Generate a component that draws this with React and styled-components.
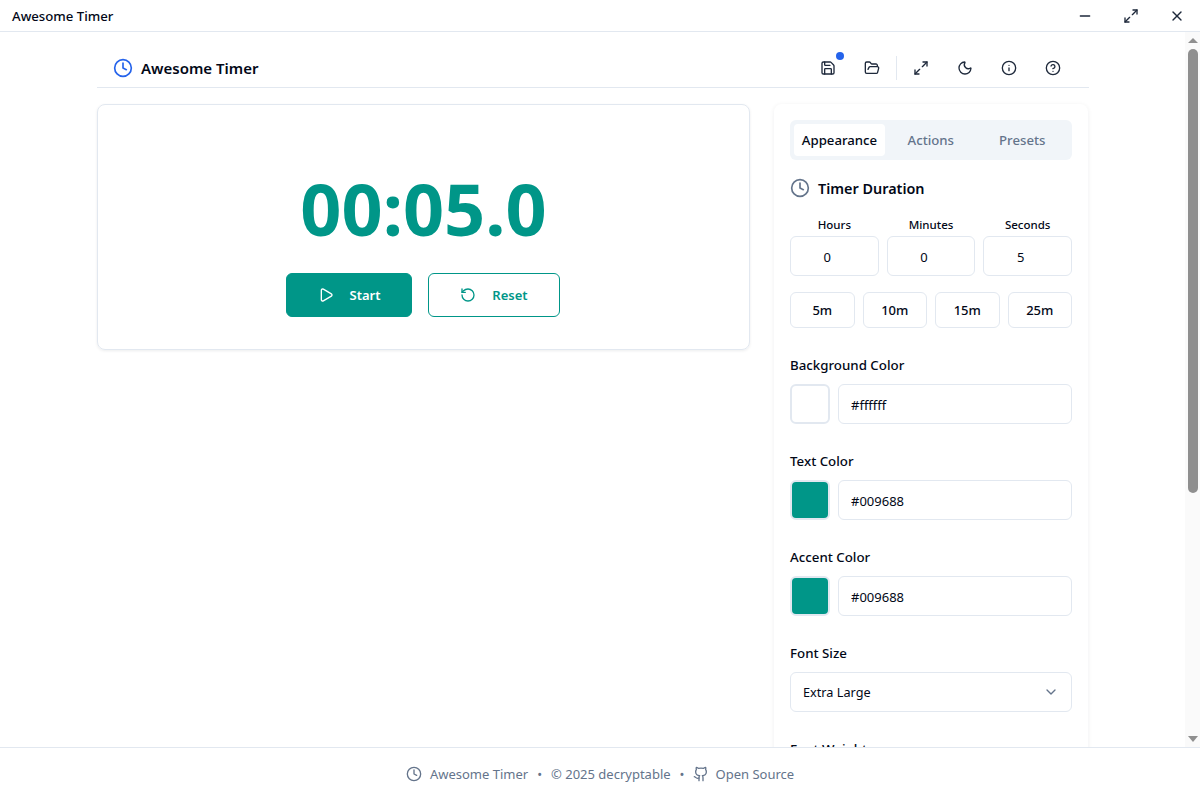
import React from 'react';
import styled, { createGlobalStyle } from 'styled-components';
import {
  ChevronDown,
  CircleHelp,
  Clock,
  FolderOpen,
  Github,
  Info,
  Maximize2,
  Minus,
  Moon,
  Play,
  RotateCcw,
  Save,
  X,
} from 'lucide-react';

const GlobalStyle = createGlobalStyle`
  html, body {
    margin: 0;
    height: 100%;
    overflow: hidden;
    background: #ffffff;
    font-family: 'Noto Sans', 'Open Sans', sans-serif;
    color: #020817;
  }
  * { box-sizing: border-box; }
`;

const Window = styled.div`
  display: flex;
  flex-direction: column;
  height: 100vh;
`;

const TitleBar = styled.div`
  display: flex;
  align-items: center;
  justify-content: space-between;
  flex: none;
  height: 32px;
  padding-left: 12px;
  border-bottom: 1px solid #e2e8f0;
`;

const WindowTitle = styled.span`
  font-size: 13.2px;
  font-weight: 500;
  color: #020817;
`;

const WindowControls = styled.div`
  display: flex;
`;

const WindowButton = styled.div`
  display: flex;
  align-items: center;
  justify-content: center;
  width: 46px;
  height: 31px;
  color: #1e293b;
`;

const Body = styled.div`
  display: flex;
  flex: 1;
  min-height: 0;
`;

const Scroller = styled.div`
  flex: 1;
  min-width: 0;
  overflow: hidden;
`;

// the window's own scrollbar, headless browsers don't paint one
const ScrollRail = styled.div`
  display: flex;
  flex-direction: column;
  align-items: center;
  flex: none;
  width: 15px;
  background: #fafafa;
`;

const ScrollArrow = styled.div`
  display: flex;
  align-items: center;
  justify-content: center;
  flex: none;
  height: 17px;
  margin-top: ${(p) => (p.$down ? 'auto' : '0')};

  &::before {
    content: '';
    border-left: 5px solid transparent;
    border-right: 5px solid transparent;
    border-bottom: ${(p) => (p.$down ? '0' : '5px solid #8f8f8f')};
    border-top: ${(p) => (p.$down ? '6px solid #8f8f8f' : '0')};
  }
`;

const ScrollThumb = styled.div`
  flex: none;
  width: 10px;
  height: 444px;
  border-radius: 5px;
  background: #8f8f8f;
`;

const Page = styled.div`
  width: 992px;
  margin-left: 97px;
  padding-bottom: 16px;
`;

const Header = styled.header`
  display: flex;
  align-items: center;
  justify-content: space-between;
  height: 56px;
  padding: 16px 18px 0 16px;
  border-bottom: 1px solid #e2e8f0;
`;

const Brand = styled.div`
  display: flex;
  align-items: center;
  gap: 8px;
  color: #2563eb;
`;

const BrandName = styled.h1`
  margin: 0;
  font-size: 15px;
  font-weight: 600;
  color: #020817;
`;

const Toolbar = styled.div`
  display: flex;
  align-items: center;
  gap: 8px;
`;

const ToolButton = styled.div`
  position: relative;
  display: flex;
  align-items: center;
  justify-content: center;
  width: 36px;
  height: 36px;
  color: #1e293b;
`;

const Dot = styled.span`
  position: absolute;
  top: 2px;
  right: 2px;
  width: 8px;
  height: 8px;
  border-radius: 50%;
  background: #2563eb;
`;

const Divider = styled.span`
  width: 1px;
  height: 24px;
  margin: 0 -2px;
  background: #e2e8f0;
`;

const Columns = styled.main`
  display: grid;
  grid-template-columns: 653px 314px;
  gap: 24px;
  align-items: start;
  padding-top: 16px;
`;

const TimerCard = styled.section`
  display: flex;
  flex-direction: column;
  align-items: center;
  height: 246px;
  padding-top: 62px;
  border: 1px solid #e2e8f0;
  border-radius: 8px;
  box-shadow: 0 1px 3px rgba(15, 23, 42, 0.08);
`;

const TimerValue = styled.div`
  font-size: 72px;
  line-height: 82px;
  font-weight: 700;
  color: #009688;
`;

const TimerActions = styled.div`
  display: flex;
  gap: 16px;
  margin: 24px 1px 0 0;
`;

const ActionButton = styled.div`
  display: flex;
  align-items: center;
  justify-content: center;
  gap: 16px;
  width: ${(p) => (p.$filled ? '126px' : '132px')};
  height: 44px;
  border: 1px solid #009688;
  border-radius: 6px;
  font-size: 13px;
  font-weight: 600;
  background: ${(p) => (p.$filled ? '#009688' : '#ffffff')};
  color: ${(p) => (p.$filled ? '#ffffff' : '#009688')};
`;

const SidePanel = styled.aside`
  min-height: 1013px;
  padding: 16px;
  border-radius: 8px;
  box-shadow: 0 1px 5px rgba(15, 23, 42, 0.07);
`;

const Tabs = styled.div`
  display: grid;
  grid-template-columns: 91px 1fr 1fr;
  align-items: center;
  height: 40px;
  padding: 4px;
  border-radius: 6px;
  background: #f1f5f9;
`;

const Tab = styled.div`
  display: flex;
  align-items: center;
  justify-content: center;
  height: 32px;
  border-radius: 4px;
  font-size: 13.2px;
  font-weight: 500;
  background: ${(p) => (p.$active ? '#ffffff' : 'transparent')};
  color: ${(p) => (p.$active ? '#020817' : '#64748b')};
`;

const SectionTitle = styled.h2`
  display: flex;
  align-items: center;
  gap: 8px;
  margin: 16px 0 0;
  height: 24px;
  font-size: 14.4px;
  font-weight: 600;
  color: #020817;

  svg {
    color: #64748b;
  }
`;

const TimeGrid = styled.div`
  display: grid;
  grid-template-columns: repeat(3, 1fr);
  gap: 8px;
  margin-top: 16px;
`;

const TimeField = styled.div`
  display: flex;
  flex-direction: column;
`;

const TimeLabel = styled.label`
  height: 20px;
  font-size: 11.5px;
  line-height: 18px;
  font-weight: 500;
  text-align: center;
`;

const Input = styled.input`
  display: block;
  width: 100%;
  min-width: 0;
  height: 40px;
  padding: 1px 12px 0;
  border: 1px solid #e2e8f0;
  border-radius: 6px;
  outline: none;
  font: inherit;
  font-size: 13px;
  color: #020817;
  background: #ffffff;
`;

const TimeInput = styled(Input)`
  padding: 1px 26px 0 12px;
  text-align: center;
`;

const Presets = styled.div`
  display: grid;
  grid-template-columns: repeat(4, 1fr);
  gap: 8px;
  margin-top: 16px;
`;

const PresetButton = styled.div`
  display: flex;
  align-items: center;
  justify-content: center;
  height: 36px;
  border: 1px solid #e2e8f0;
  border-radius: 6px;
  font-size: 13px;
  font-weight: 500;
`;

const Field = styled.div`
  margin-top: 28px;
`;

const FieldLabel = styled.label`
  display: block;
  height: 20px;
  margin-bottom: 8px;
  font-size: 13.3px;
  line-height: 18px;
  font-weight: 500;
`;

const ColorRow = styled.div`
  display: flex;
  gap: 8px;
`;

const Swatch = styled.div`
  flex: none;
  width: 40px;
  height: 40px;
  border: 2px solid #e2e8f0;
  border-radius: 6px;
  background: ${(p) => p.$color};
`;

const Select = styled.div`
  display: flex;
  align-items: center;
  justify-content: space-between;
  height: 40px;
  padding: 0 12px;
  border: 1px solid #e2e8f0;
  border-radius: 6px;
  font-size: 12.7px;

  svg {
    color: #64748b;
  }
`;

const Footer = styled.footer`
  display: flex;
  align-items: center;
  justify-content: center;
  flex: none;
  height: 53px;
  gap: 8px;
  border-top: 1px solid #e2e8f0;
  font-size: 13px;
  color: #64748b;
`;

const FooterDot = styled.span`
  margin: 0 1px;
`;

const FooterLink = styled.span`
  display: flex;
  align-items: center;
  gap: 6px;
`;

const colorFields = [
  { label: 'Background Color', value: '#ffffff' },
  { label: 'Text Color', value: '#009688' },
  { label: 'Accent Color', value: '#009688' },
];

const timeFields = [
  { label: 'Hours', value: '0' },
  { label: 'Minutes', value: '0' },
  { label: 'Seconds', value: '5' },
];

const App = () => {
  return (
    <Window>
      <GlobalStyle />
      <TitleBar>
        <WindowTitle>Awesome Timer</WindowTitle>
        <WindowControls>
          <WindowButton><Minus size={16} /></WindowButton>
          <WindowButton><Maximize2 size={16} /></WindowButton>
          <WindowButton><X size={16} /></WindowButton>
        </WindowControls>
      </TitleBar>

      <Body>
        <Scroller>
          <Page>
            <Header>
              <Brand>
                <Clock size={20} />
                <BrandName>Awesome Timer</BrandName>
              </Brand>
              <Toolbar>
                <ToolButton><Save size={16} /><Dot /></ToolButton>
                <ToolButton><FolderOpen size={16} /></ToolButton>
                <Divider />
                <ToolButton><Maximize2 size={16} /></ToolButton>
                <ToolButton><Moon size={16} /></ToolButton>
                <ToolButton><Info size={16} /></ToolButton>
                <ToolButton><CircleHelp size={16} /></ToolButton>
              </Toolbar>
            </Header>

            <Columns>
              <TimerCard>
                <TimerValue>00:05.0</TimerValue>
                <TimerActions>
                  <ActionButton $filled><Play size={16} />Start</ActionButton>
                  <ActionButton><RotateCcw size={16} />Reset</ActionButton>
                </TimerActions>
              </TimerCard>

              <SidePanel>
                <Tabs>
                  <Tab $active>Appearance</Tab>
                  <Tab>Actions</Tab>
                  <Tab>Presets</Tab>
                </Tabs>

                <SectionTitle><Clock size={20} />Timer Duration</SectionTitle>
                <TimeGrid>
                  {timeFields.map((f) => (
                    <TimeField key={f.label}>
                      <TimeLabel>{f.label}</TimeLabel>
                      <TimeInput readOnly value={f.value} />
                    </TimeField>
                  ))}
                </TimeGrid>

                <Presets>
                  {['5m', '10m', '15m', '25m'].map((p) => (
                    <PresetButton key={p}>{p}</PresetButton>
                  ))}
                </Presets>

                {colorFields.map((f) => (
                  <Field key={f.label}>
                    <FieldLabel>{f.label}</FieldLabel>
                    <ColorRow>
                      <Swatch $color={f.value} />
                      <Input readOnly value={f.value} />
                    </ColorRow>
                  </Field>
                ))}

                <Field>
                  <FieldLabel>Font Size</FieldLabel>
                  <Select>Extra Large<ChevronDown size={16} /></Select>
                </Field>

                <Field>
                  <FieldLabel>Font Weight</FieldLabel>
                </Field>
              </SidePanel>
            </Columns>
          </Page>
        </Scroller>
        <ScrollRail>
          <ScrollArrow />
          <ScrollThumb />
          <ScrollArrow $down />
        </ScrollRail>
      </Body>

      <Footer>
        <Clock size={16} />
        <span>Awesome Timer</span>
        <FooterDot>•</FooterDot>
        <span>© 2025 decryptable</span>
        <FooterDot>•</FooterDot>
        <FooterLink><Github size={16} />Open Source</FooterLink>
      </Footer>
    </Window>
  );
};

export default App;
